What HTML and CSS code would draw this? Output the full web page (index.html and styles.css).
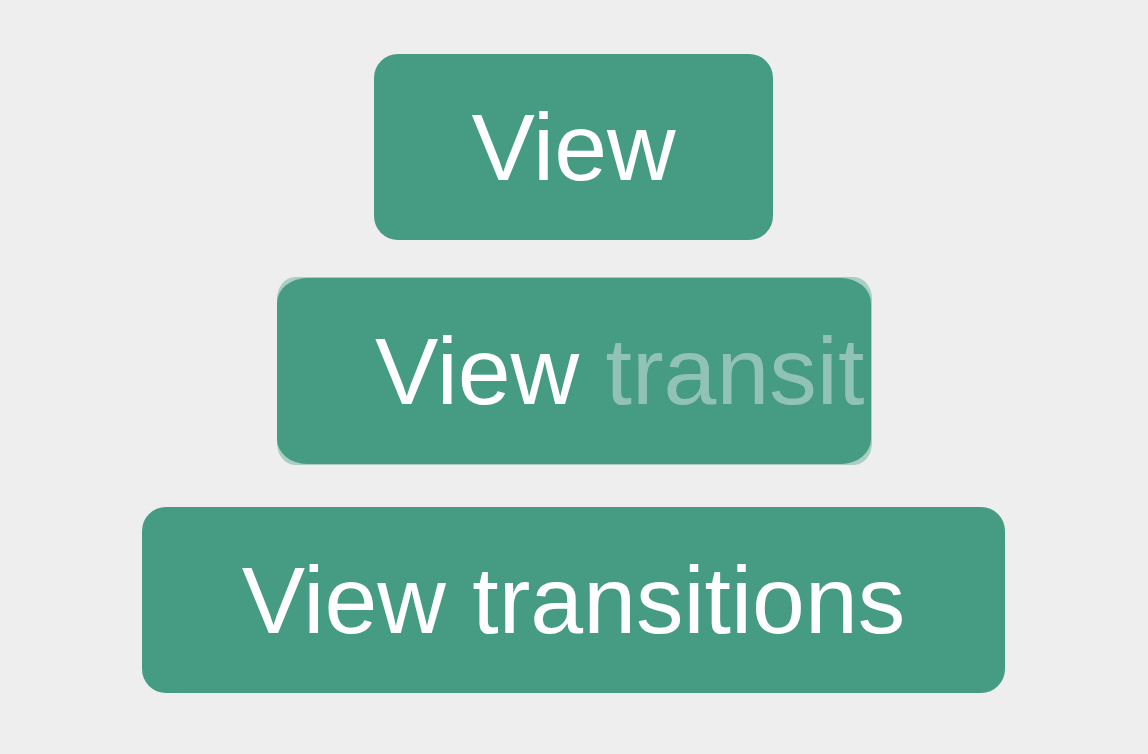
FILE: index.html
```html
<!DOCTYPE html>
<html lang="en">
<head>
<meta charset="utf-8">
<title>View transitions</title>
<link rel="stylesheet" href="styles.css">
</head>
<body>
  <main class="stack">
    <button class="btn btn-small">View</button>
    <div class="morph">
      <div class="morph-new"></div>
      <div class="morph-old">
        <span class="morph-label">View <span class="fade">transit</span></span>
      </div>
    </div>
    <button class="btn btn-large">View transitions</button>
  </main>
</body>
</html>
```

FILE: styles.css
```css
html, body {
  margin: 0;
  padding: 0;
  background: #eeeeee;
  height: 100%;
}

.stack {
  display: flex;
  flex-direction: column;
  align-items: center;
  padding-top: 54px;
  gap: 38px;
  font-family: "Liberation Sans", Arial, sans-serif;
}

.btn {
  border: none;
  margin: 0;
  padding: 0;
  background: #469b83;
  color: #ffffff;
  font-family: "Liberation Sans", Arial, sans-serif;
  font-size: 95px;
  line-height: 186px;
  height: 186px;
  border-radius: 24px;
  text-align: center;
  white-space: nowrap;
}

.btn-small {
  width: 399px;
  margin-left: -1px;
}

.btn-large {
  width: 863px;
  margin-left: -1px;
}

.morph {
  position: relative;
  width: 595px;
  height: 188px;
  margin-top: -1px;
  margin-bottom: 4px;
  margin-left: 1px;
}

.morph-new {
  position: absolute;
  inset: 0;
  background: #a9cfc2;
  border-radius: 18px / 22px;
}

.morph-old {
  position: absolute;
  top: 1px;
  left: 0;
  right: 1px;
  bottom: 1px;
  background: #469b83;
  border-radius: 30px / 25px;
  overflow: hidden;
  padding-left: 98px;
  box-sizing: border-box;
}

.morph-label {
  display: block;
  color: #ffffff;
  font-size: 95px;
  line-height: 186px;
  white-space: nowrap;
}

.fade {
  color: rgba(255, 255, 255, 0.4);
}
```
